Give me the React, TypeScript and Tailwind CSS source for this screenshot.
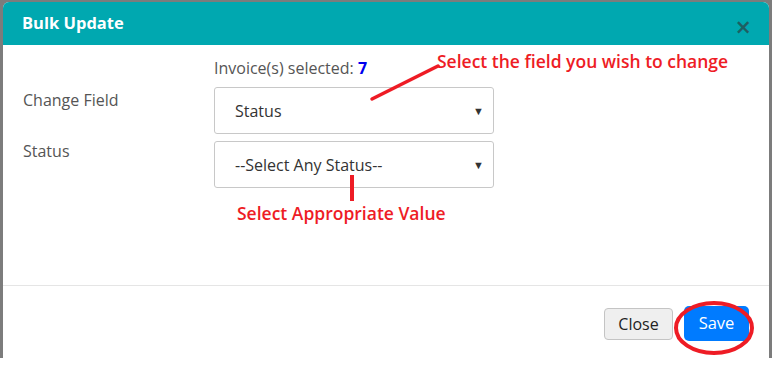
import React from "react";

const font = { fontFamily: '"Open Sans", "Noto Sans", sans-serif' };

function SelectBox({ value }: { value: string }) {
  return (
    <div className="relative flex h-[47px] w-[280px] items-center rounded-[3px] border border-[#c8c8c8] bg-white pl-[20px] text-[16px] text-[#333]">
      <span>{value}</span>
      <span className="absolute right-[9px] top-[15px] text-[11px] text-[#333]">▼</span>
    </div>
  );
}

export default function App() {
  return (
    <div className="h-[374px] w-[772px] bg-white" style={font}>
      <div className="h-[358px] bg-[#7c7c7c] pl-[3px] pr-[3px] pt-[2px]">
        <div className="relative h-[356px] overflow-hidden rounded-t-[6px] bg-white">
          <div className="flex h-[43px] items-center justify-between bg-[#00a8b0] pl-[19px] pr-[18px]">
            <span className="text-[16.5px] font-bold text-white">Bulk Update</span>
            <span className="mt-[5px] text-[27px] font-semibold leading-none text-[#1f5e62]">×</span>
          </div>

          <div className="relative h-[241px] border-b border-[#e5e5e5] pt-[11px]">
            <div className="pl-[211px] text-[16px] leading-[24px] text-[#555]">
              Invoice(s) selected: <span className="font-bold text-[#0000ee]">7</span>
            </div>
            <div className="mt-[7px] flex flex-col gap-[7px]">
              <div className="flex">
                <div className="w-[211px] pl-[20px] pt-[1px] text-[16px] text-[#555]">Change Field</div>
                <SelectBox value="Status" />
              </div>
              <div className="flex">
                <div className="w-[211px] pl-[20px] text-[16px] leading-[20px] text-[#555]">Status</div>
                <SelectBox value="--Select Any Status--" />
              </div>
            </div>

            <div className="absolute left-[434px] top-[3px] text-[17.5px] font-semibold text-[#ee1c25]">
              Select the field you wish to change
            </div>
            <div className="absolute left-[234px] top-[155px] text-[17.5px] font-semibold text-[#ee1c25]">
              Select Appropriate Value
            </div>
            <svg className="absolute left-0 top-0" width="766" height="241">
              <line x1="369" y1="54" x2="435" y2="21" stroke="#ee1c25" strokeWidth="3.5" strokeLinecap="round" />
              <line x1="349" y1="130" x2="349" y2="156" stroke="#ee1c25" strokeWidth="4" />
            </svg>
          </div>

          <div className="relative flex items-center justify-end gap-[11px] pr-[20px] pt-[20px]">
            <button className="h-[32px] w-[69px] rounded-[4px] border border-[#c4c4c4] bg-[#efefef] text-[16px] text-[#222]">
              Close
            </button>
            <button className="h-[35px] w-[65px] rounded-[5px] bg-[#007bff] text-[16.5px] text-white">
              Save
            </button>
            <svg className="absolute right-[14px] top-[14px]" width="82" height="56">
              <ellipse cx="41" cy="28" rx="38" ry="25" fill="none" stroke="#ee1c25" strokeWidth="4" />
            </svg>
          </div>
        </div>
      </div>
    </div>
  );
}
